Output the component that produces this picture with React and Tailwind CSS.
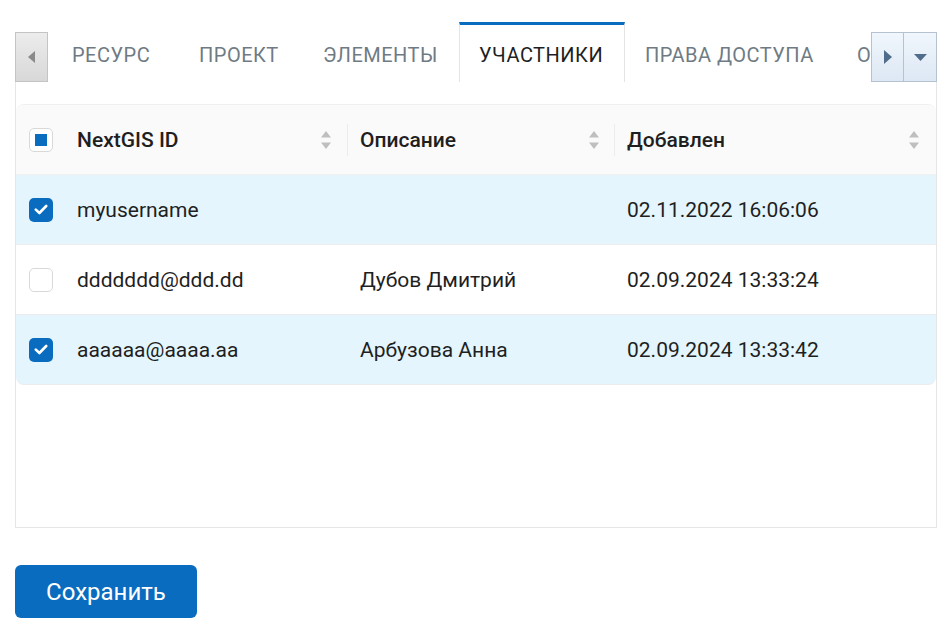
import React from "react";

const tabs = [
  { label: "Ресурс", w: "w-[127px]" },
  { label: "Проект", w: "w-[124px]" },
  { label: "Элементы", w: "w-[156px]" },
  { label: "Участники", w: "w-[166px]" },
  { label: "Права доступа", w: "w-[212px]" },
  { label: "Описание", w: "w-auto" },
];

const rows = [
  { id: "myusername", desc: "", added: "02.11.2022 16:06:06", checked: true },
  { id: "ddddddd@ddd.dd", desc: "Дубов Дмитрий", added: "02.09.2024 13:33:24", checked: false },
  { id: "aaaaaa@aaaa.aa", desc: "Арбузова Анна", added: "02.09.2024 13:33:42", checked: true },
];

const SortIcon = () => (
  <svg width="12" height="22" viewBox="0 0 12 22" className="shrink-0">
    <path d="M6 2 L11 8.5 L1 8.5 Z" fill="#bfbfbf" />
    <path d="M6 20 L11 13.5 L1 13.5 Z" fill="#bfbfbf" />
  </svg>
);

const Checkbox = ({ checked, indeterminate }) => {
  if (checked) {
    return (
      <div className="w-6 h-6 rounded-[5px] bg-[#0a6cbf] flex items-center justify-center">
        <svg width="14" height="11" viewBox="0 0 14 11">
          <path d="M1.8 5.6 L5.4 9 L12.2 2" stroke="white" strokeWidth="2.6" fill="none" strokeLinecap="round" strokeLinejoin="round" />
        </svg>
      </div>
    );
  }
  return (
    <div className="w-6 h-6 rounded-[5px] bg-white border border-[#d9d9d9] flex items-center justify-center">
      {indeterminate && <div className="w-3 h-3 bg-[#0a6cbf]" />}
    </div>
  );
};

export default function App() {
  return (
    <div className="w-[950px] h-[628px] bg-white pl-[15px] pt-[22px] font-['Roboto',sans-serif]">
      <div className="w-[922px]">
        {/* Tab bar */}
        <div className="flex items-end h-[60px]">
          <div className="w-[33px] h-[50px] shrink-0 border border-[#c4c4c4] bg-gradient-to-b from-[#ececec] to-[#d8d8d8] flex items-center justify-center">
            <svg width="8" height="12" viewBox="0 0 8 12">
              <path d="M7 0 L7 12 L0 6 Z" fill="#8a8a8a" />
            </svg>
          </div>
          <div className="flex-1 min-w-0 overflow-hidden flex items-end h-[60px] pl-1">
            {tabs.map((t, i) =>
              i === 3 ? (
                <div
                  key={t.label}
                  className={`${t.w} shrink-0 h-[60px] pl-[19px] pt-[3px] flex items-center border-t-[3px] border-t-[#0a6cbf] border-x border-x-[#e4e4e4] bg-white text-[20px] uppercase tracking-[0.5px] text-[#1f1f1f] whitespace-nowrap`}
                >
                  {t.label}
                </div>
              ) : (
                <div
                  key={t.label}
                  className={`${t.w} shrink-0 h-[60px] pl-5 pt-[6px] flex items-center text-[20px] uppercase tracking-[0.5px] text-[#6f7b84] whitespace-nowrap`}
                >
                  {t.label}
                </div>
              )
            )}
          </div>
          <div className="flex shrink-0 h-[50px] border border-[#b5c3d1] bg-gradient-to-b from-[#f0f6fc] to-[#dde8f4]">
            <div className="w-[32px] flex items-center justify-center border-r border-[#b5c3d1]">
              <svg width="8" height="14" viewBox="0 0 8 14">
                <path d="M0 0 L8 7 L0 14 Z" fill="#4f6d8a" />
              </svg>
            </div>
            <div className="w-[32px] flex items-center justify-center">
              <svg width="13" height="7" viewBox="0 0 13 7">
                <path d="M0 0 L13 0 L6.5 7 Z" fill="#4f6d8a" />
              </svg>
            </div>
          </div>
        </div>

        {/* Panel */}
        <div className="h-[446px] border-x border-b border-[#e6e6e6] pt-[22px]">
          <div className="rounded-t-[8px] border-t border-[#f0f0f0] text-[21px] text-[#1f1f1f]">
            {/* Header */}
            <div className="flex h-[70px] bg-[#fafafa] border-b border-[#f0f0f0] rounded-t-[8px] items-center">
              <div className="w-[46px] pl-[13px] shrink-0">
                <Checkbox indeterminate />
              </div>
              <div className="w-[285px] shrink-0 flex items-center justify-between pl-[15px] pr-[15px] font-medium">
                <span className="pt-[3px]">NextGIS ID</span>
                <SortIcon />
              </div>
              <div className="w-px h-[32px] bg-[#ececec] shrink-0" />
              <div className="w-[266px] shrink-0 flex items-center justify-between pl-[12px] pr-[14px] font-medium">
                <span className="pt-[3px]">Описание</span>
                <SortIcon />
              </div>
              <div className="w-px h-[32px] bg-[#ececec] shrink-0" />
              <div className="flex-1 flex items-center justify-between pl-[12px] pr-[16px] font-medium">
                <span className="pt-[3px]">Добавлен</span>
                <SortIcon />
              </div>
            </div>
            {/* Rows */}
            {rows.map((r, i) => (
              <div
                key={r.id}
                className={`flex h-[70px] items-center border-b border-[#ececec] ${
                  r.checked ? "bg-[#e4f5fd]" : "bg-white"
                } ${i === rows.length - 1 ? "rounded-b-[8px]" : ""}`}
              >
                <div className="w-[46px] pl-[13px] shrink-0">
                  <Checkbox checked={r.checked} />
                </div>
                <div className="w-[286px] shrink-0 pl-[15px] pt-[3px]">{r.id}</div>
                <div className="w-[267px] shrink-0 pl-[12px] pt-[3px]">{r.desc}</div>
                <div className="flex-1 pl-[12px] pt-[3px]">{r.added}</div>
              </div>
            ))}
          </div>
        </div>

        <button className="mt-[37px] w-[182px] h-[53px] rounded-[6px] bg-[#0a6cbf] text-white text-[24px] flex items-center justify-center">
          Сохранить
        </button>
      </div>
    </div>
  );
}
